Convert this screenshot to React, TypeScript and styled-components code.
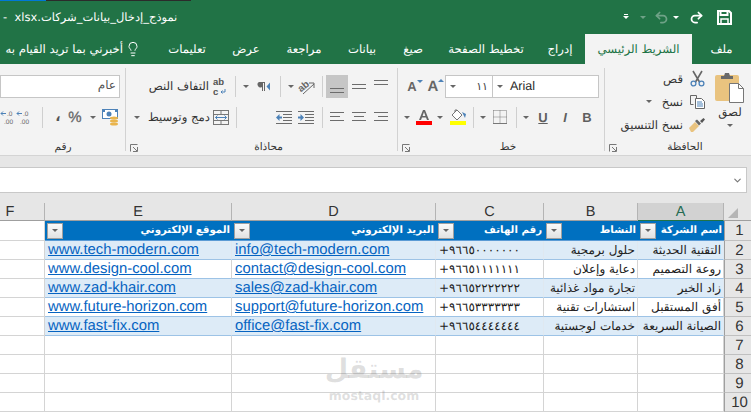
import React from "react";
import styled, { createGlobalStyle } from "styled-components";
import { Redo2, Undo2, Lightbulb, ChevronDown } from "lucide-react";

const GREEN = "#217346";
const UI = `"DejaVu Sans", "Liberation Sans", sans-serif`;
const LATIN = `"Liberation Sans", Arial, sans-serif`;

const Global = createGlobalStyle`
  html, body { margin: 0; padding: 0; background: #fff; overflow: hidden; }
  * { box-sizing: border-box; }
`;

const Page = styled.div`
  position: relative;
  width: 751px;
  height: 412px;
  overflow: hidden;
  background: #e6e6e6;
  font-family: ${UI};
  text-rendering: geometricPrecision;
`;

const TopStrip = styled.div`
  display: flex;
  height: 1px;
  background: ${GREEN};
`;
const StripPart = styled.div<{ $w: number; $c: string }>`
  width: ${({ $w }) => $w}px;
  background: ${({ $c }) => $c};
`;

const TitleBar = styled.div`
  display: flex;
  direction: rtl;
  justify-content: space-between;
  align-items: center;
  height: 33px;
  padding-bottom: 1px;
  background: ${GREEN};
  color: #fff;
`;
const Qat = styled.div`
  display: flex;
  align-items: center;
  height: 100%;
  padding-right: 19px;
`;
const QatSlot = styled.div<{ $w: number; $dim?: boolean }>`
  display: flex;
  width: ${({ $w }) => $w}px;
  align-items: center;
  justify-content: center;
  color: ${({ $dim }) => ($dim ? "#6fa287" : "#fff")};
`;
const QatCaret = styled.span<{ $dim?: boolean }>`
  width: 0;
  height: 0;
  border-left: 3px solid transparent;
  border-right: 3px solid transparent;
  border-top: 3px solid ${({ $dim }) => ($dim ? "#6fa287" : "#fff")};
`;
const CustomizeMark = styled(QatCaret)`
  box-shadow: 0 -3px 0 -1px #fff;
`;
const Title = styled.div`
  padding-left: 3px;
  font-size: 11.5px;
  white-space: pre;
`;

const TabBar = styled.div`
  display: flex;
  direction: rtl;
  height: 30px;
  background: ${GREEN};
`;
const Tab = styled.div<{ $w: number; $active?: boolean }>`
  display: flex;
  width: ${({ $w }) => $w}px;
  align-items: center;
  justify-content: center;
  font-size: 11.7px;
  white-space: nowrap;
  color: ${({ $active }) => ($active ? GREEN : "#fff")};
  background: ${({ $active }) => ($active ? "#f3f3f3" : "transparent")};
`;
const TellMe = styled.div`
  display: flex;
  align-items: center;
  gap: 2px;
  padding-right: 14px;
  color: #fff;
  font-size: 11.7px;
  white-space: nowrap;
`;

const Ribbon = styled.div`
  display: flex;
  direction: rtl;
  height: 92px;
  background: #f3f3f3;
  border-bottom: 1px solid #d4d4d4;
`;
const Group = styled.div<{ $w: number; $last?: boolean }>`
  position: relative;
  display: flex;
  flex-direction: column;
  flex: none;
  width: ${({ $w }) => $w}px;
  padding-top: 10px;
  overflow: hidden;
  &::after {
    content: "";
    position: absolute;
    left: 0;
    top: 4px;
    bottom: 4px;
    width: 1px;
    background: ${({ $last }) => ($last ? "transparent" : "#d2d2d2")};
  }
`;
const Row = styled.div<{ $mt?: number }>`
  display: flex;
  align-items: center;
  height: 24px;
  margin-top: ${({ $mt }) => $mt ?? 0}px;
  padding-right: 5px;
`;
const Slot = styled.div<{ $w: number; $on?: boolean }>`
  display: flex;
  flex: none;
  width: ${({ $w }) => $w}px;
  height: 23px;
  align-items: center;
  justify-content: center;
  background: ${({ $on }) => ($on ? "#c6c6c6" : "transparent")};
`;
const Sep = styled.div`
  flex: none;
  width: 1px;
  height: 21px;
  background: #cfcfcf;
`;
const Caret = styled.span`
  width: 0;
  height: 0;
  border-left: 3px solid transparent;
  border-right: 3px solid transparent;
  border-top: 3px solid #666;
`;
const RibbonText = styled.div<{ $w?: number }>`
  flex: none;
  width: ${({ $w }) => ($w ? `${$w}px` : "auto")};
  padding-right: 2px;
  font-size: 11.7px;
  color: #333;
  white-space: nowrap;
`;
const GroupFoot = styled.div<{ $launch?: boolean }>`
  position: absolute;
  left: 1px;
  right: 0;
  bottom: 0;
  height: 16px;
  padding-left: ${({ $launch }) => ($launch ? 14 : 0)}px;
  text-align: center;
  font-size: 10.5px;
  line-height: 16px;
  color: #333;
`;
const Launcher = styled.svg`
  position: absolute;
  left: 4px;
  bottom: 3px;
`;
const Drawing = styled.svg`
  direction: ltr;
  flex: none;
  overflow: visible;
`;

const Clip = styled.div`
  display: flex;
  height: 68px;
  margin-top: -4px;
`;
const PasteCol = styled.div`
  display: flex;
  flex-direction: column;
  align-items: center;
  width: 42px;
  padding-top: 2px;
  font-size: 11.7px;
  color: #333;
`;
const PasteLabel = styled.div`
  margin: 2px 0 4px;
  line-height: 15px;
`;
const ClipList = styled.div`
  display: flex;
  flex-direction: column;
  gap: 6px;
`;
const ClipItem = styled.div`
  display: flex;
  align-items: center;
  height: 17px;
`;
const ClipIcon = styled.div`
  display: flex;
  justify-content: center;
  width: 24px;
`;

const Combo = styled.div<{ $w: number }>`
  display: flex;
  flex: none;
  align-items: center;
  justify-content: space-between;
  width: ${({ $w }) => $w}px;
  height: 23px;
  padding: 0 4px;
  margin-left: -1px;
  background: #fff;
  border: 1px solid #c6c6c6;
  font-size: 11px;
  color: #444;
`;
const FontName = styled.span`
  direction: ltr;
  flex: 1;
  padding-left: 7px;
  text-align: left;
  font: 12.5px ${LATIN};
  color: #2b2b2b;
`;
const ToolLetter = styled.span<{ $italic?: boolean; $under?: boolean }>`
  font: ${({ $italic }) => ($italic ? "italic" : "normal")} bold 13px ${LATIN};
  color: #5f5f5f;
  text-decoration: ${({ $under }) => ($under ? "underline" : "none")};
`;
const BigA = styled.span<{ $size: number }>`
  display: flex;
  direction: ltr;
  align-items: flex-start;
  font: bold ${({ $size }) => $size}px ${LATIN};
  color: #666;
`;
const Percent = styled.span`
  font: 15px ${LATIN};
  -webkit-text-stroke: 0.3px #666;
  color: #666;
`;
const Comma = styled.span`
  font: bold 14px ${UI};
  color: #555;
`;
const NumCombo = styled.div`
  flex: none;
  width: 120px;
  height: 23px;
  padding: 2px 3px 0 0;
  background: #fff;
  border: 1px solid #c6c6c6;
  font-size: 12px;
  color: #555;
`;

const Gap = styled.div`
  height: 11px;
`;
const FormulaRow = styled.div`
  display: flex;
  height: 26px;
  padding-right: 4px;
`;
const FormulaBox = styled.div`
  display: flex;
  flex: 1;
  align-items: center;
  justify-content: flex-end;
  padding-right: 3px;
  background: #fff;
  border: 1px solid #c8c8c8;
  border-left: 0;
  color: #777;
`;
const Gap2 = styled.div`
  height: 10px;
`;

const Sheet = styled.div`
  display: grid;
  grid-template-columns: 45px 187px 204px 108px 94px 86px 27px;
  grid-template-rows: 18px 20px repeat(9, 19px) 19px;
  background: #fff;
`;
const ColHead = styled.div<{ $sel?: boolean; $cut?: boolean }>`
  padding: 1px ${({ $cut }) => ($cut ? 24 : 0)}px 0 0;
  text-align: center;
  font: 14.5px/17px ${LATIN};
  color: ${({ $sel }) => ($sel ? "#256b52" : "#333")};
  background: ${({ $sel }) => ($sel ? "#d2d2d2" : "#e6e6e6")};
  border-bottom: 1px solid ${({ $sel }) => ($sel ? GREEN : "#9f9f9f")};
  border-right: 1px solid #b4b4b4;
`;
const Corner = styled.div`
  display: flex;
  padding: 5px 0 0 4px;
  background: #e6e6e6;
  border-bottom: 1px solid #9f9f9f;
`;
const Triangle = styled.span`
  width: 0;
  height: 0;
  border-top: 10px solid transparent;
  border-right: 10px solid #b5b5b5;
`;
const RowHead = styled.div`
  padding: 1px 0 0 3px;
  text-align: center;
  font: 15px/17px ${LATIN};
  color: #333;
  background: #e6e6e6;
  border-left: 1px solid #9f9f9f;
  border-bottom: 1px solid #c0c0c0;
`;
const HeadCell = styled.div`
  display: flex;
  align-items: center;
  justify-content: space-between;
  padding: 0 2px;
  background: #0070c0;
  color: #fff;
  font-size: 10.2px;
  font-weight: bold;
  white-space: nowrap;
  border-bottom: 1px solid #5b9bd5;
`;
const HeadText = styled.span`
  direction: rtl;
`;
const FilterBtn = styled.span`
  display: flex;
  flex: none;
  align-items: center;
  justify-content: center;
  width: 16px;
  height: 16px;
  background: linear-gradient(#fafafa, #e2e2e2);
  border: 1px solid #a0a0a0;
`;
const Cell = styled.div<{ $band?: boolean; $table?: boolean }>`
  display: flex;
  align-items: center;
  min-width: 0;
  white-space: nowrap;
  color: #222;
  background: ${({ $band }) => ($band ? "#ddebf7" : "#fff")};
  border-right: 1px solid ${({ $band }) => ($band ? "#dfe8f0" : "#d4d4d4")};
  border-bottom: 1px solid ${({ $table }) => ($table ? "#9dc3e6" : "#d4d4d4")};
`;
const LinkCell = styled(Cell)`
  padding: 0 0 0 3px;
  font: 14.85px ${LATIN};
  color: #0563c1;
  text-decoration: underline;
`;
const PhoneCell = styled(Cell)`
  direction: ltr;
  padding-left: 3px;
  font-size: 12px;
  letter-spacing: 0.75px;
`;
const TextCell = styled(Cell)`
  direction: rtl;
  padding-right: 2px;
  font-size: 12px;
  overflow: hidden;
`;

const Watermark = styled.div`
  position: absolute;
  left: 318px;
  top: 353px;
  width: 112px;
  text-align: center;
  color: rgba(110, 110, 110, 0.22);
  pointer-events: none;
`;
const WmArabic = styled.div`
  font: bold 27px/34px ${UI};
`;
const WmLatin = styled.div`
  margin-top: 1px;
  font: bold 12.5px/16px ${UI};
`;

const blue = "#4d82b8";

const SaveIcon = () => (
  <Drawing width="15" height="15" viewBox="0 0 15 15" fill="none" stroke="#fff" strokeWidth="2">
    <path d="M1 1h11l2 2v11H1z" />
    <path d="M3.500 1v4h7V1" />
    <path d="M4 14V9h7v5" strokeWidth="1.500" />
  </Drawing>
);
const CutIcon = () => (
  <Drawing width="15" height="16" viewBox="0 0 15 16" fill="none" strokeWidth="1.300">
    <path d="M3 0l6.500 11M12 0L5.500 11" stroke="#666" strokeWidth="1.600" />
    <circle cx="3.500" cy="12.500" r="2.400" stroke={blue} />
    <circle cx="11.500" cy="12.500" r="2.400" stroke={blue} />
  </Drawing>
);
const CopyIcon = () => (
  <Drawing width="15" height="14" viewBox="0 0 15 14" fill="none" stroke="#666">
    <path d="M.5.5h6v3M.5.5v9h3" />
    <path d="M5.500 3.500h6l3 3v7h-9z" fill="#fff" />
    <path d="M7 7h5M7 9h6M7 11h6" stroke={blue} />
  </Drawing>
);
const PainterIcon = () => (
  <Drawing width="16" height="14" viewBox="0 0 16 14">
    <path d="M0 10l6-6 4 4-6 6H2l-1-2z" fill="#e9c37f" />
    <path d="M6 3l2-1.500 4 4-2 2z" fill="#666" />
    <path d="M11 3l3.500-3L16 1.500 13 5z" fill="#555" />
  </Drawing>
);
const PasteIcon = () => (
  <Drawing width="30" height="31" viewBox="0 0 30 31">
    <rect x="0" y="3" width="24" height="26" rx="2" fill="#e9c37f" />
    <path d="M6 4h3l1-3h4l1 3h3v3H6z" fill="#6a6a6a" />
    <path d="M14.500 11.500h9l5 5v14h-14z" fill="#fff" stroke="#777" />
    <path d="M23.500 11.500v5h5" fill="none" stroke="#777" />
  </Drawing>
);
const Launch = () => (
  <Launcher width="8" height="8" viewBox="0 0 8 8" fill="none" stroke="#777">
    <path d="M.5 7.500v-7h7M7.500 3v4.500H3M7 7L3 3" />
  </Launcher>
);
const Lines = ({ ys, xs }: { ys: number[]; xs: [number, number][] }) => (
  <Drawing width="15" height="15" viewBox="0 0 15 15" stroke="#6c6c6c" fill="none">
    {ys.map((y, i) => (
      <path key={i} d={`M${xs[i][0]} ${y + 0.5}H${xs[i][1]}`} />
    ))}
  </Drawing>
);
const w3: [number, number][] = [[0, 14], [0, 14], [0, 14]];
const IndentIcon = ({ flip }: { flip?: boolean }) => (
  <Drawing width="16" height="13" viewBox="0 0 16 13" fill="none">
    <path d="M0 .5h16M7 3.500h9M7 6.500h9M7 9.500h9M0 12.500h16" stroke="#6c6c6c" />
    {flip ? (
      <path d="M0 6.500L3.500 3v2.500H6v2H3.500V10z" fill={blue} />
    ) : (
      <path d="M6 6.500L2.500 3v2.500H0v2h2.500V10z" fill={blue} />
    )}
  </Drawing>
);
const OrientIcon = () => (
  <Drawing width="17" height="17" viewBox="0 0 17 17" fill="none">
    <path d="M5 16L16 6" stroke="#666" />
    <path d="M16 10V5h-5" stroke="#666" />
    <text x="0" y="12" fontSize="10" fontWeight="bold" fontFamily="Liberation Sans" fill="#666" transform="rotate(-40 5 9)">ab</text>
  </Drawing>
);
const ParaIcon = () => (
  <Drawing width="13" height="11" viewBox="0 0 13 11">
    <path d="M1 1h6v9H6V2H5v8H4V6a2.500 2.500 0 0 1-3-5z" fill="#666" />
    <path d="M12 1.500v8L8.500 5.500z" fill={blue} />
  </Drawing>
);
const WrapIcon = () => (
  <Drawing width="14" height="17" viewBox="0 0 14 17">
    <text x="0" y="7" fontSize="9.500" fontWeight="bold" fontFamily="Liberation Sans" fill="#555">ab</text>
    <text x="0" y="17" fontSize="9.500" fontWeight="bold" fontFamily="Liberation Sans" fill="#555">c</text>
    <path d="M12 11v3H8M9.500 12.500L8 14l1.500 1.500" stroke={blue} fill="none" />
  </Drawing>
);
const MergeIcon = () => (
  <Drawing width="16" height="15" viewBox="0 0 16 15" fill="none" stroke="#777">
    <rect x=".5" y=".5" width="15" height="14" />
    <path d="M.5 4.500h15M.5 10.500h15M8 .5v4M8 10.500v4" />
    <path d="M2.500 7.500h11M4.500 5.500l-2 2 2 2M11.500 5.500l2 2-2 2" stroke={blue} />
  </Drawing>
);
const BorderIcon = () => (
  <Drawing width="14" height="14" viewBox="0 0 14 14" fill="none" stroke="#777" strokeDasharray="1 1">
    <path d="M.5 .5h13v13M.5 .5v13M7 .5v13M.5 7h13" />
    <path d="M0 13.500h14" strokeDasharray="none" />
  </Drawing>
);
const FontColor = () => (
  <Drawing width="16" height="15" viewBox="0 0 16 15">
    <path d="M3 10L7 0h2l4 10h-2l-1-2.500H6L5 10zM6.600 6h2.800L8 2z" fill="#666" />
    <rect x="0" y="11" width="16" height="4" fill="#ff0000" />
  </Drawing>
);
const FillColor = () => (
  <Drawing width="16" height="16" viewBox="0 0 16 16" fill="none">
    <path d="M7 1l5 5-5 5-5-5z" stroke="#777" fill="#fff" />
    <path d="M5 3V1h2" stroke="#777" />
    <path d="M12 3l4 2-1 4z" fill={blue} />
    <rect x="0" y="12" width="16" height="4" fill="#ffff00" />
  </Drawing>
);
const Accounting = () => (
  <Drawing width="17" height="17" viewBox="0 0 17 17">
    <rect x=".5" y=".5" width="15" height="9" fill="#fff" stroke={blue} />
    <circle cx="7" cy="5" r="2.500" fill={blue} />
    <rect x="1" y="1" width="2" height="2" fill={blue} />
    <rect x="13" y="1" width="2" height="2" fill={blue} />
    <ellipse cx="12" cy="9" rx="4" ry="1.500" fill="#e9b44c" />
    <ellipse cx="12" cy="12" rx="4" ry="1.500" fill="#e9b44c" />
    <ellipse cx="12" cy="15" rx="4" ry="1.500" fill="#e9b44c" />
  </Drawing>
);
const DecimalIcon = () => (
  <Drawing width="15" height="14" viewBox="0 0 15 14">
    <text x="6" y="6" fontSize="6.500" fontFamily="Liberation Sans" fill="#666">.0</text>
    <text x="3" y="13.500" fontSize="6.500" fontFamily="Liberation Sans" fill="#666">.00</text>
    <path d="M0 3.500h5M2 1.500L0 3.500l2 2" stroke={blue} fill="none" />
  </Drawing>
);
const SizeArrow = styled.span<{ $down?: boolean }>`
  width: 0;
  height: 0;
  margin-top: 1px;
  border-left: 3px solid transparent;
  border-right: 3px solid transparent;
  border-${({ $down }) => ($down ? "top" : "bottom")}: 3px solid ${blue};
`;

const tabs: [string, number][] = [
  ["إدراج", 50],
  ["تخطيط الصفحة", 98],
  ["صيغ", 48],
  ["بيانات", 54],
  ["مراجعة", 62],
  ["عرض", 54],
  ["تعليمات", 64],
];

const columns = ["F", "E", "D", "C", "B", "A"];
const headers = ["الموقع الإلكتروني", "البريد الإلكتروني", "رقم الهاتف", "النشاط", "اسم الشركة"];
const rows = [
  ["www.tech-modern.com", "info@tech-modern.com", "+٩٦٦٥٠٠٠٠٠٠٠", "حلول برمجية", "التقنية الحديثة"],
  ["www.design-cool.com", "contact@design-cool.com", "+٩٦٦٥١١١١١١١", "دعاية وإعلان", "روعة التصميم"],
  ["www.zad-khair.com", "sales@zad-khair.com", "+٩٦٦٥٢٢٢٢٢٢٢", "تجارة مواد غذائية", "زاد الخير"],
  ["www.future-horizon.com", "support@future-horizon.com", "+٩٦٦٥٣٣٣٣٣٣٣", "استشارات تقنية", "أفق المستقبل"],
  ["www.fast-fix.com", "office@fast-fix.com", "+٩٦٦٥٤٤٤٤٤٤٤", "خدمات لوجستية", "الصيانة السريعة"],
];

export default function App() {
  return (
    <Page>
      <Global />
      <TopStrip>
        <StripPart $w={46} $c="#0078d7" />
        <StripPart $w={145} $c="#2b2b2b" />
      </TopStrip>
      <TitleBar>
        <Qat>
          <QatSlot $w={16}><SaveIcon /></QatSlot>
          <QatSlot $w={6} />
          <QatSlot $w={28}><Redo2 size={15} strokeWidth={2.8} /></QatSlot>
          <QatSlot $w={12}><QatCaret /></QatSlot>
          <QatSlot $w={18} $dim><Undo2 size={15} strokeWidth={2.8} /></QatSlot>
          <QatSlot $w={18} $dim><QatCaret $dim /></QatSlot>
          <QatSlot $w={16}><CustomizeMark /></QatSlot>
        </Qat>
        <Title>{"نموذج_إدخال_بيانات_شركات.xlsx  -"}</Title>
      </TitleBar>

      <TabBar>
        <Tab $w={59}>ملف</Tab>
        <Tab $w={107} $active>الشريط الرئيسي</Tab>
        {tabs.map(([name, w]) => (
          <Tab key={name} $w={w}>{name}</Tab>
        ))}
        <TellMe>
          <Lightbulb size={16} strokeWidth={1.5} />
          أخبرني بما تريد القيام به
        </TellMe>
      </TabBar>

      <Ribbon>
        <Group $w={147}>
          <Clip>
            <PasteCol>
              <PasteIcon />
              <PasteLabel>لصق</PasteLabel>
              <Caret />
            </PasteCol>
            <ClipList>
              <ClipItem>
                <ClipIcon><CutIcon /></ClipIcon>
                <RibbonText>قص</RibbonText>
              </ClipItem>
              <ClipItem>
                <ClipIcon><CopyIcon /></ClipIcon>
                <RibbonText>نسخ</RibbonText>
                <Slot $w={26}><Caret /></Slot>
              </ClipItem>
              <ClipItem>
                <ClipIcon><PainterIcon /></ClipIcon>
                <RibbonText>نسخ التنسيق</RibbonText>
              </ClipItem>
            </ClipList>
          </Clip>
          <GroupFoot $launch>
            <Launch />
            الحافظة
          </GroupFoot>
        </Group>

        <Group $w={207}>
          <Row>
            <Combo $w={107}><FontName>Arial</FontName><Caret /></Combo>
            <Combo $w={48}><span>١١</span><Caret /></Combo>
            <Slot $w={20}>
              <BigA $size={15}>A<SizeArrow /></BigA>
            </Slot>
            <Slot $w={22}>
              <BigA $size={13}>A<SizeArrow $down /></BigA>
            </Slot>
          </Row>
          <Row $mt={7}>
            <Slot $w={24}><ToolLetter>B</ToolLetter></Slot>
            <Slot $w={20}><ToolLetter $italic>I</ToolLetter></Slot>
            <Slot $w={24}><ToolLetter $under>U</ToolLetter></Slot>
            <Slot $w={10}><Caret /></Slot>
            <Slot $w={10}><Sep /></Slot>
            <Slot $w={22}><BorderIcon /></Slot>
            <Slot $w={12}><Caret /></Slot>
            <Slot $w={8}><Sep /></Slot>
            <Slot $w={22}><FillColor /></Slot>
            <Slot $w={14}><Caret /></Slot>
            <Slot $w={18}><FontColor /></Slot>
            <Slot $w={17}><Caret /></Slot>
          </Row>
          <GroupFoot $launch>
            <Launch />
            خط
          </GroupFoot>
        </Group>

        <Group $w={272}>
          <Row>
            <Slot $w={22}><Lines ys={[1, 5]} xs={w3} /></Slot>
            <Slot $w={22}><Lines ys={[5, 9]} xs={w3} /></Slot>
            <Slot $w={22} $on><Lines ys={[9, 13]} xs={w3} /></Slot>
            <Slot $w={8}><Sep /></Slot>
            <Slot $w={24}><OrientIcon /></Slot>
            <Slot $w={6}><Caret /></Slot>
            <Slot $w={16}><Sep /></Slot>
            <Slot $w={16}><ParaIcon /></Slot>
            <Slot $w={20}><Caret /></Slot>
            <Slot $w={2}><Sep /></Slot>
            <Slot $w={5} />
            <Slot $w={18}><WrapIcon /></Slot>
            <RibbonText $w={64}>التفاف النص</RibbonText>
          </Row>
          <Row $mt={7}>
            <Slot $w={22}><Lines ys={[2, 6, 10]} xs={[[0, 14], [4, 14], [0, 14]]} /></Slot>
            <Slot $w={22}><Lines ys={[2, 6, 10]} xs={[[0, 14], [2, 12], [0, 14]]} /></Slot>
            <Slot $w={22}><Lines ys={[2, 6, 10]} xs={[[0, 14], [0, 10], [0, 14]]} /></Slot>
            <Slot $w={8}><Sep /></Slot>
            <Slot $w={24}><IndentIcon /></Slot>
            <Slot $w={21}><IndentIcon flip /></Slot>
            <Slot $w={36} />
            <Slot $w={2}><Sep /></Slot>
            <Slot $w={5} />
            <Slot $w={18}><MergeIcon /></Slot>
            <RibbonText $w={64}>دمج وتوسيط</RibbonText>
            <Slot $w={23}><Caret /></Slot>
          </Row>
          <GroupFoot $launch>
            <Launch />
            محاذاة
          </GroupFoot>
        </Group>

        <Group $w={125} $last>
          <Row>
            <NumCombo>عام</NumCombo>
          </Row>
          <Row $mt={7}>
            <Slot $w={20}><Accounting /></Slot>
            <Slot $w={14}><Caret /></Slot>
            <Slot $w={22}><Percent>%</Percent></Slot>
            <Slot $w={12}><Comma>،</Comma></Slot>
            <Slot $w={20}><Sep /></Slot>
            <Slot $w={16}><DecimalIcon /></Slot>
            <Slot $w={16}><DecimalIcon /></Slot>
          </Row>
          <GroupFoot>رقم</GroupFoot>
        </Group>
      </Ribbon>

      <Gap />
      <FormulaRow>
        <FormulaBox><ChevronDown size={11} strokeWidth={2.5} /></FormulaBox>
      </FormulaRow>
      <Gap2 />

      <Sheet>
        {columns.map((c) => (
          <ColHead key={c} $sel={c === "A"} $cut={c === "F"}>{c}</ColHead>
        ))}
        <Corner><Triangle /></Corner>

        <Cell />
        {headers.map((h) => (
          <HeadCell key={h}>
            <FilterBtn><Caret /></FilterBtn>
            <HeadText>{h}</HeadText>
          </HeadCell>
        ))}
        <RowHead>1</RowHead>

        {rows.map((r, i) => {
          const band = i % 2 === 0;
          return (
            <React.Fragment key={r[0]}>
              <Cell />
              <LinkCell $band={band} $table>{r[0]}</LinkCell>
              <LinkCell $band={band} $table>{r[1]}</LinkCell>
              <PhoneCell $band={band} $table>{r[2]}</PhoneCell>
              <TextCell $band={band} $table>{r[3]}</TextCell>
              <TextCell $band={band} $table>{r[4]}</TextCell>
              <RowHead>{i + 2}</RowHead>
            </React.Fragment>
          );
        })}

        {[7, 8, 9, 10].map((n) => (
          <React.Fragment key={n}>
            <Cell /><Cell /><Cell /><Cell /><Cell /><Cell />
            <RowHead>{n}</RowHead>
          </React.Fragment>
        ))}
      </Sheet>

      <Watermark>
        <WmArabic>مستقل</WmArabic>
        <WmLatin>mostaql.com</WmLatin>
      </Watermark>
    </Page>
  );
}
